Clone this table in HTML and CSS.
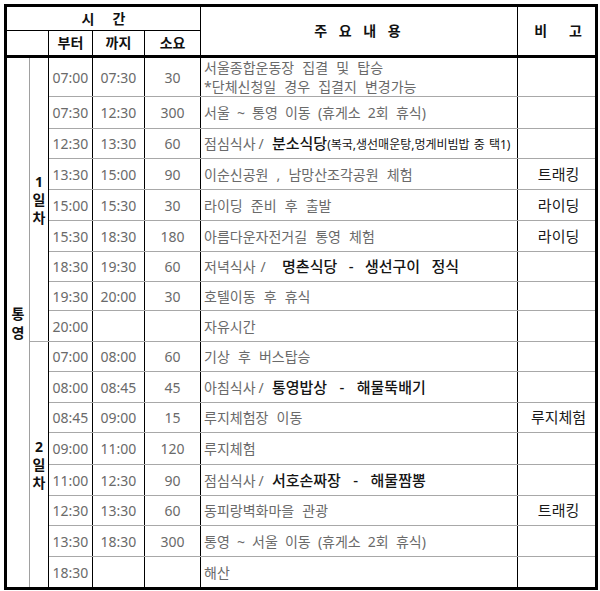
FILE: index.html
```html
<!DOCTYPE html>
<html lang="ko">
<head>
<meta charset="utf-8">
<title>통영 일정표</title>
<link rel="stylesheet" href="styles.css">
</head>
<body>
<table class="sched">
  <colgroup>
    <col class="c-place"><col class="c-day"><col class="c-from"><col class="c-to"><col class="c-dur"><col class="c-main"><col class="c-note">
  </colgroup>
  <thead>
    <tr class="h1">
      <th colspan="5" class="hd-time">시&nbsp;&nbsp;&nbsp;&nbsp;&nbsp;간</th>
      <th rowspan="2" class="hd-main">주 요 내 용</th>
      <th rowspan="2" class="hd-note">비&nbsp;&nbsp;&nbsp;&nbsp;&nbsp;&nbsp;고</th>
    </tr>
    <tr class="h2">
      <th colspan="2"></th><th>부터</th><th>까지</th><th>소요</th>
    </tr>
  </thead>
  <tbody>
    <tr class="r37">
      <td rowspan="17" class="place">통<br>영</td>
      <td rowspan="9" class="day">1<br>일<br>차</td>
      <td class="t">07:00</td><td class="t">07:30</td><td class="t">30</td>
      <td class="m">서울종합운동장 집결 및 탑승<br>*단체신청일 경우 집결지 변경가능</td><td class="n"></td>
    </tr>
    <tr class="r32"><td class="t">07:30</td><td class="t">12:30</td><td class="t">300</td><td class="m m-tight">서울 ~ 통영 이동 (휴게소 2회 휴식)</td><td class="n"></td></tr>
    <tr class="r30"><td class="t">12:30</td><td class="t">13:30</td><td class="t">60</td><td class="m">점심식사<span class="sl">/</span> <span class="b">분소식당</span><span class="sm">(복국,생선매운탕,멍게비빔밥 중 택1)</span></td><td class="n"></td></tr>
    <tr class="r31"><td class="t">13:30</td><td class="t">15:00</td><td class="t">90</td><td class="m">이순신공원 , 남망산조각공원 체험</td><td class="n">트래킹</td></tr>
    <tr class="r31"><td class="t">15:00</td><td class="t">15:30</td><td class="t">30</td><td class="m">라이딩 준비 후 출발</td><td class="n">라이딩</td></tr>
    <tr class="r31"><td class="t">15:30</td><td class="t">18:30</td><td class="t">180</td><td class="m">아름다운자전거길 통영 체험</td><td class="n">라이딩</td></tr>
    <tr class="r30"><td class="t">18:30</td><td class="t">19:30</td><td class="t">60</td><td class="m">저녁식사<span class="sl sl-wide">/</span>&nbsp; <span class="b b-mid">명촌식당 - 생선구이 정식</span></td><td class="n"></td></tr>
    <tr class="r29"><td class="t">19:30</td><td class="t">20:00</td><td class="t">30</td><td class="m">호텔이동 후 휴식</td><td class="n"></td></tr>
    <tr class="r31"><td class="t">20:00</td><td class="t"></td><td class="t"></td><td class="m">자유시간</td><td class="n"></td></tr>
    <tr class="r30">
      <td rowspan="8" class="day">2<br>일<br>차</td>
      <td class="t">07:00</td><td class="t">08:00</td><td class="t">60</td><td class="m">기상 후 버스탑승</td><td class="n"></td>
    </tr>
    <tr class="r31"><td class="t">08:00</td><td class="t">08:45</td><td class="t">45</td><td class="m">아침식사<span class="sl">/</span> <span class="b">통영밥상 - 해물뚝배기</span></td><td class="n"></td></tr>
    <tr class="r30"><td class="t">08:45</td><td class="t">09:00</td><td class="t">15</td><td class="m">루지체험장 이동</td><td class="n">루지체험</td></tr>
    <tr class="r32"><td class="t">09:00</td><td class="t">11:00</td><td class="t">120</td><td class="m">루지체험</td><td class="n"></td></tr>
    <tr class="r31"><td class="t">11:00</td><td class="t">12:30</td><td class="t">90</td><td class="m">점심식사<span class="sl">/</span> <span class="b">서호손짜장 - 해물짬뽕</span></td><td class="n"></td></tr>
    <tr class="r30"><td class="t">12:30</td><td class="t">13:30</td><td class="t">60</td><td class="m">동피랑벽화마을 관광</td><td class="n">트래킹</td></tr>
    <tr class="r31"><td class="t">13:30</td><td class="t">18:30</td><td class="t">300</td><td class="m m-tight">통영 ~ 서울 이동 (휴게소 2회 휴식)</td><td class="n"></td></tr>
    <tr class="r32"><td class="t">18:30</td><td class="t"></td><td class="t"></td><td class="m">해산</td><td class="n"></td></tr>
  </tbody>
</table>
</body>
</html>
```

FILE: styles.css
```css
html, body {
  margin: 0;
  padding: 0;
  background: #fff;
}
body {
  font-family: "Noto Sans", "Noto Sans CJK KR", sans-serif;
  font-size: 14px;
  color: #6a6a6a;
}
.sched {
  margin: 4px 0 0 4px;
  width: 594px;
  table-layout: fixed;
  border-collapse: collapse;
  border: 3px solid #000;
}
.c-place { width: 24px; }
.c-day { width: 19px; }
.c-from { width: 44px; }
.c-to { width: 52px; }
.c-dur { width: 56px; }
.c-main { width: 317px; }
.c-note { width: 79px; }

th {
  border: 1px solid #000;
  padding: 0;
  font-weight: 700;
  color: #111;
  font-size: 14px;
  line-height: 18px;
  text-align: center;
  vertical-align: middle;
  white-space: nowrap;
}
.h1 { height: 25px; }
.h2 { height: 26px; }
.h2 th, .hd-main, .hd-note { border-bottom: 3px solid #000; }
.hd-main { letter-spacing: 3px; word-spacing: 2px; }
.hd-note { padding-left: 3px; }

td {
  padding: 0;
  border-left: 1px solid #000;
  border-right: 1px solid #000;
  border-top: 1px solid #a8a8a8;
  border-bottom: 1px solid #a8a8a8;
  line-height: 19px;
  vertical-align: middle;
  white-space: nowrap;
  overflow: hidden;
}
.r37 { height: 37px; }
.r32 { height: 32px; }
.r31 { height: 31px; }
.r30 { height: 30px; }
.r29 { height: 29px; }

.place {
  border-right-color: #a0a0a0;
  text-align: center;
  font-weight: 700;
  color: #111;
  line-height: 19px;
}
.day {
  border-left-color: #a0a0a0;
  text-align: center;
  font-weight: 700;
  color: #111;
  line-height: 18px;
}
.t {
  text-align: center;
  font-size: 14px;
}
.m {
  padding-left: 3px;
  word-spacing: 4.5px;
}
.m-tight {
  word-spacing: 3.5px;
}
.sl {
  margin-left: 3px;
}
.sl-wide {
  margin-left: 5px;
}
.b {
  color: #151515;
  font-weight: 500;
  font-size: 15px;
  word-spacing: 8.5px;
}
.b-mid { word-spacing: 7.5px; }
.sm {
  color: #151515;
  font-size: 12px;
  word-spacing: 1px;
}
.n {
  text-align: center;
  color: #1a1a1a;
  font-size: 15px;
  padding-left: 4px;
}
```
